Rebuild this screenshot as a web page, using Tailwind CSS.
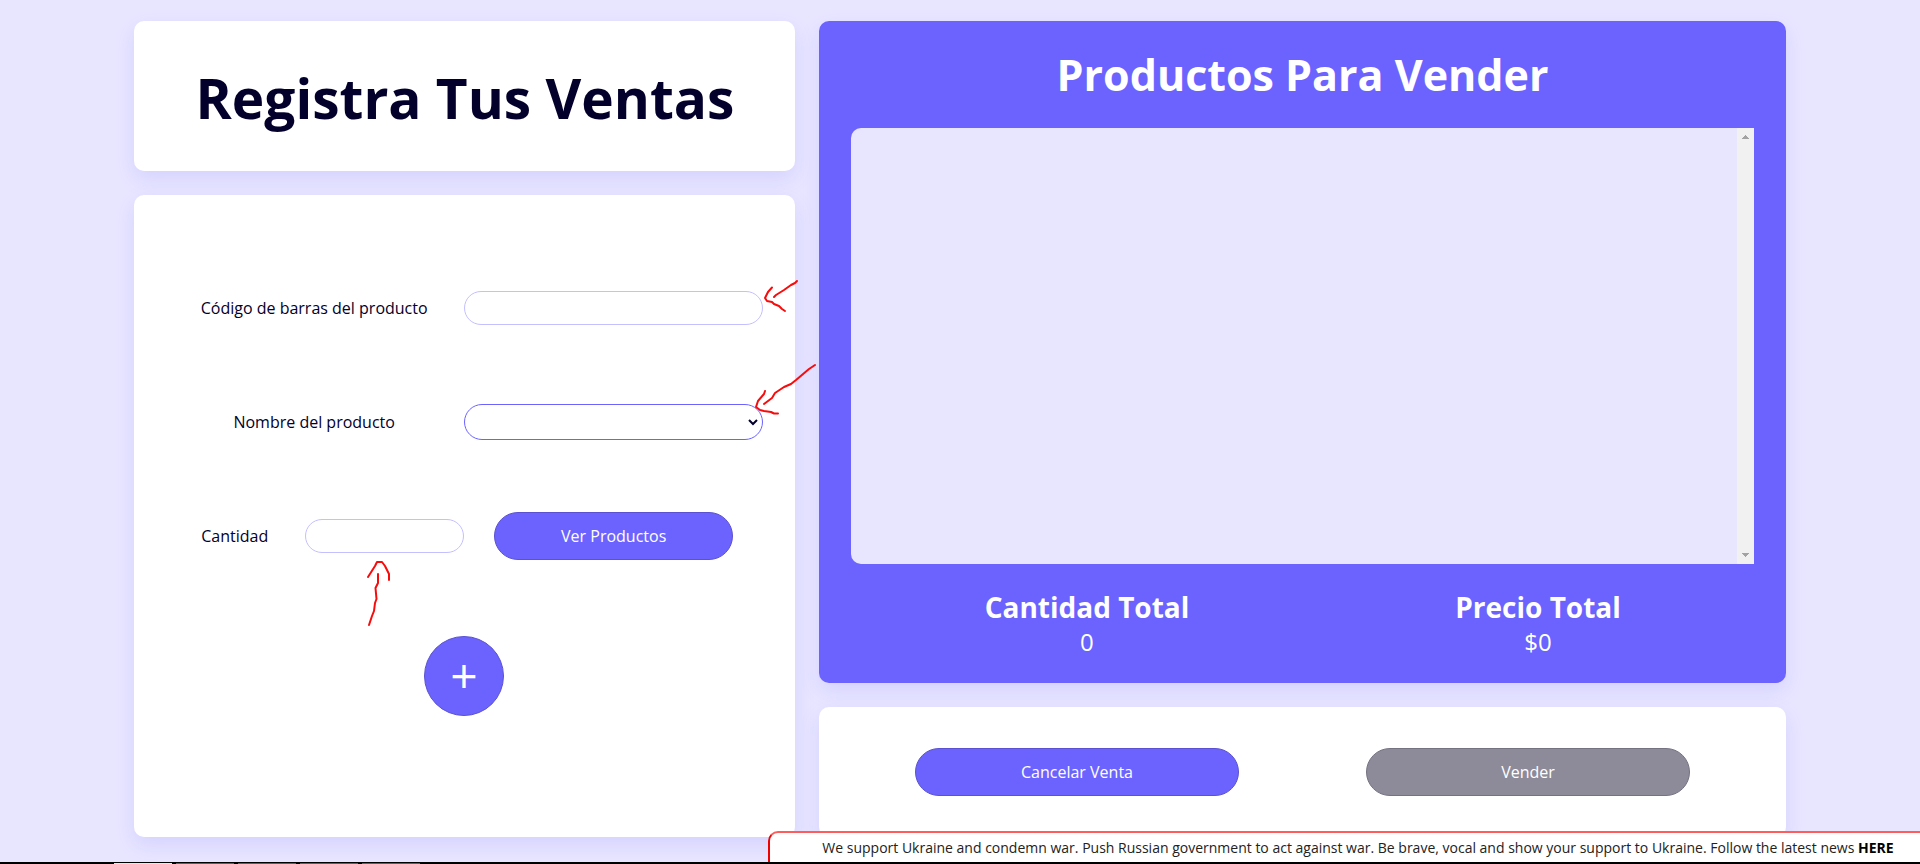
<!DOCTYPE html>
<html lang="es">
<head>
<meta charset="utf-8">
<meta name="viewport" content="width=device-width, initial-scale=1">
<title>Registra Tus Ventas</title>
<script src="https://cdn.jsdelivr.net/npm/@tailwindcss/browser@4"></script>
</head>
<body class="relative h-screen overflow-hidden bg-[#e8e6ff] font-['Open_Sans','Noto_Sans',sans-serif] text-base text-[#03002b]">
<main class="mx-auto grid w-[86%] grid-cols-[13fr_19fr] items-start gap-6 pt-[21px]">
  <div class="flex flex-col gap-6">
    <header class="flex h-[150px] items-center justify-center rounded-[10px] bg-white pt-0.5 shadow-[0_8px_20px_rgba(108,99,255,0.15)]">
      <h1 class="text-[55px] leading-none font-bold">Registra Tus Ventas</h1>
    </header>

    <form class="relative z-10 grid grid-rows-[114px_114px_114px_166px] rounded-[10px] bg-white pt-14 pr-8 pb-[78px] pl-[30px] shadow-[0_8px_20px_rgba(108,99,255,0.15)]">
      <div class="grid grid-cols-2 items-center">
        <label for="codigo" class="text-center">Código de barras del producto</label>
        <div class="relative">
          <input id="codigo" type="text" class="block h-[34px] w-full rounded-full border border-[#c4c0ff] bg-white px-4 outline-none">
          <svg class="pointer-events-none absolute -top-3 left-full h-[34px] w-9" viewBox="763 279 36 34" fill="none" stroke="#f90b0b" stroke-width="2" stroke-linecap="round" stroke-linejoin="round"><path d="M797 281L795 283L791 285L784 290L776 295L774 297M772 287.500L768 292L765 298L767 301L772 302L774 304L779 306L782 309L785 311"/></svg>
        </div>
      </div>

      <div class="grid grid-cols-2 items-center">
        <label for="nombre" class="text-center">Nombre del producto</label>
        <div class="relative">
          <select id="nombre" class="block h-9 w-full appearance-none rounded-full border border-[#6c63ff] bg-white px-4 outline-none"><option></option></select>
          <svg class="pointer-events-none absolute top-[14px] right-1 h-2 w-3" viewBox="0 0 12 8" fill="none" stroke="#03002b" stroke-width="2"><path d="M2 2L6 6L10 2"/></svg>
          <svg class="pointer-events-none absolute -top-[41px] left-full -ml-2 h-[53px] w-[62px]" viewBox="755 363 62 53" fill="none" stroke="#f90b0b" stroke-width="2" stroke-linecap="round" stroke-linejoin="round"><path d="M815 365L809 369L796 380L791 384L784 387L775 393L772 398L764 404M765 391L764 394L758 401L756 407L760 410L764 411L771 412L774 413.500L778 413.500"/></svg>
        </div>
      </div>

      <div class="grid grid-cols-2 items-center">
        <div class="grid grid-cols-[47fr_53fr] items-center">
          <label for="cantidad" class="text-center">Cantidad</label>
          <div class="relative">
            <input id="cantidad" type="text" class="block h-[34px] w-full rounded-full border border-[#c4c0ff] bg-white px-4 outline-none">
            <svg class="pointer-events-none absolute top-[41px] left-[61px] h-[67px] w-[26px]" viewBox="368 560 26 67" fill="none" stroke="#f90b0b" stroke-width="2" stroke-linecap="round" stroke-linejoin="round"><path d="M370 577L377 566L379 562L384 562L387 566L391 574L391 580M380 574L380 583L377.500 588L378.500 599L377 603L376 611L374 616L371 625"/></svg>
          </div>
        </div>
        <button type="button" class="h-12 w-4/5 justify-self-center rounded-full border border-[#5a52d0] bg-[#6c63ff] font-medium text-white">Ver Productos</button>
      </div>

      <div class="flex items-center justify-center">
        <button type="button" aria-label="Agregar producto" class="flex size-20 items-center justify-center rounded-full border border-[#5a52d0] bg-[#6c63ff] pb-0.5 text-5xl leading-none font-medium text-white">+</button>
      </div>
    </form>
  </div>

  <div class="flex flex-col gap-6">
    <section class="rounded-[10px] bg-[#6c63ff] px-8 pb-6 text-white shadow-[0_8px_20px_rgba(108,99,255,0.15)]">
      <h2 class="flex h-[107px] items-center justify-center text-[43px] leading-none font-bold">Productos Para Vender</h2>
      <div class="flex h-[436px] justify-end overflow-hidden rounded-l-[10px] bg-[#e8e6ff]">
        <div class="flex w-[17px] flex-col items-center justify-between bg-[#f1f1f1] py-[7px]" aria-hidden="true">
          <svg class="h-1 w-[7px]" viewBox="0 0 7 4" fill="#a3a3a3"><path d="M3 0h1v1h1v1h1v1h1v1H0V3h1V2h1V1h1z"/></svg>
          <svg class="h-1 w-[7px]" viewBox="0 0 7 4" fill="#a3a3a3"><path d="M0 0h7v1H6v1H5v1H4v1H3V3H2V2H1V1H0z"/></svg>
        </div>
      </div>
      <div class="-mr-[10px] ml-[10px] grid grid-cols-2 pt-[25px] text-center">
        <div>
          <h3 class="text-[28px] leading-9 font-bold">Cantidad Total</h3>
          <p class="text-2xl leading-[34px]">0</p>
        </div>
        <div>
          <h3 class="text-[28px] leading-9 font-bold">Precio Total</h3>
          <p class="text-2xl leading-[34px]">$0</p>
        </div>
      </div>
    </section>

    <section class="grid grid-cols-2 justify-items-center rounded-[10px] bg-white px-8 py-[41px] shadow-[0_8px_20px_rgba(108,99,255,0.15)]">
      <button type="button" class="h-12 w-[72%] rounded-full border border-[#5a52d0] bg-[#6c63ff] font-medium text-white">Cancelar Venta</button>
      <button type="button" class="h-12 w-[72%] rounded-full border border-[#757381] bg-[#8d8b99] font-medium text-white">Vender</button>
    </section>
  </div>
</main>

<aside class="absolute right-0 bottom-[2px] z-20 flex h-[31px] w-3/5 items-center justify-center rounded-tl-[10px] border-t-2 border-l-2 border-t-[#ff5c5c] border-l-[#f00000] bg-white pr-[10px] pl-9 text-sm whitespace-nowrap text-[#222222]">
  <p>We support Ukraine and condemn war. Push Russian government to act against war. Be brave, vocal and show your support to Ukraine. Follow the latest news <a href="#" class="font-bold text-black">HERE</a></p>
</aside>
<div class="absolute inset-x-0 bottom-0 z-20 flex h-[2px] items-end gap-1 bg-black pl-[114px]" aria-hidden="true">
  <span class="h-px w-[58px] bg-[#e8e8e8]"></span>
  <span class="h-px w-[58px] bg-[#606060]"></span>
  <span class="h-px w-[58px] bg-[#606060]"></span>
  <span class="h-px w-[58px] bg-[#606060]"></span>
  <span class="h-px w-[58px] bg-[#606060]"></span>
</div>
</body>
</html>
